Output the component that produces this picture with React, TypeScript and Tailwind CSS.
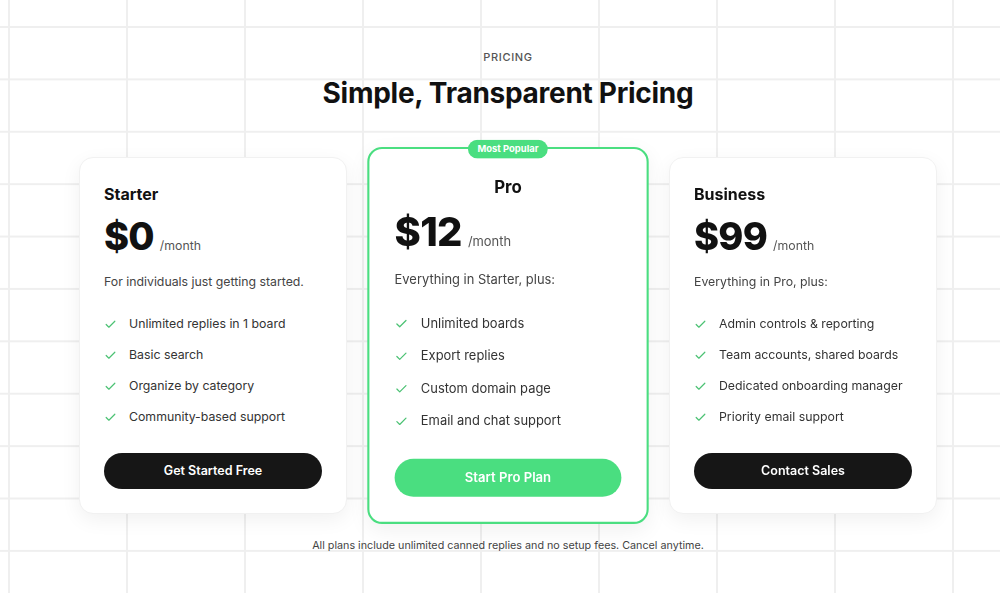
import React from "react";

const Check = () => (
  <svg width="13" height="13" viewBox="0 0 24 24" fill="none" stroke="#4cc274" strokeWidth="2.2" strokeLinecap="round" strokeLinejoin="round" className="shrink-0">
    <polyline points="20 6 9 17 4 12" />
  </svg>
);

type Plan = {
  name: string;
  price: string;
  desc: string;
  features: string[];
  cta: string;
  featured?: boolean;
};

const plans: Plan[] = [
  {
    name: "Starter",
    price: "$0",
    desc: "For individuals just getting started.",
    features: ["Unlimited replies in 1 board", "Basic search", "Organize by category", "Community-based support"],
    cta: "Get Started Free",
  },
  {
    name: "Pro",
    price: "$12",
    desc: "Everything in Starter, plus:",
    features: ["Unlimited boards", "Export replies", "Custom domain page", "Email and chat support"],
    cta: "Start Pro Plan",
    featured: true,
  },
  {
    name: "Business",
    price: "$99",
    desc: "Everything in Pro, plus:",
    features: ["Admin controls & reporting", "Team accounts, shared boards", "Dedicated onboarding manager", "Priority email support"],
    cta: "Contact Sales",
  },
];

function Card({ p }: { p: Plan }) {
  return (
    <div
      className={
        p.featured
          ? "relative w-[268px] scale-105 rounded-[14px] border-2 border-[#4ade80] bg-white px-6 pt-6 pb-6 shadow-[0_6px_20px_rgba(0,0,0,0.06)]"
          : "relative w-[268px] rounded-[14px] border border-[#f1f1f1] bg-white px-6 pt-6 pb-6 shadow-[0_6px_20px_rgba(0,0,0,0.06)]"
      }
    >
      {p.featured && (
        <div className="absolute left-1/2 top-0 -translate-x-1/2 -translate-y-1/2 rounded-full bg-[#4ade80] px-[9px] py-[3px] text-[9px] font-bold leading-[12px] text-white whitespace-nowrap">
          Most Popular
        </div>
      )}
      <div className={p.featured ? "text-center text-[16px] font-bold leading-6 text-[#111]" : "text-[16px] font-bold leading-6 text-[#111]"}>
        {p.name}
      </div>
      <div className="mt-[11px] flex items-baseline">
        <span className="text-[38px] font-extrabold leading-[38px] tracking-[-0.02em] text-[#111]">{p.price}</span>
        <span className="ml-[6px] text-[12.3px] text-[#555]">/month</span>
      </div>
      <div className="mt-[17px] text-[12.3px] leading-5 text-[#444]">{p.desc}</div>
      <ul className="mt-[22px] flex flex-col gap-[11px]">
        {p.features.map((f) => (
          <li key={f} className="flex items-center gap-3 text-[12.3px] leading-5 text-[#333] whitespace-nowrap">
            <Check />
            <span>{f}</span>
          </li>
        ))}
      </ul>
      <button
        className={
          p.featured
            ? "mt-[26px] flex h-9 w-full items-center justify-center rounded-full bg-[#4ade80] text-[12.5px] font-semibold text-white"
            : "mt-[26px] flex h-9 w-full items-center justify-center rounded-full bg-[#161616] text-[12.5px] font-semibold text-white"
        }
      >
        {p.cta}
      </button>
    </div>
  );
}

export default function App() {
  return (
    <div
      className="h-[593px] w-full overflow-hidden bg-white bg-[linear-gradient(to_right,#efefef_2px,transparent_2px),linear-gradient(to_bottom,#efefef_2px,transparent_2px)] bg-[length:118px_52.4px] bg-[position:8px_26px] pl-4"
      style={{ fontFamily: "Inter, 'Noto Sans', sans-serif" }}
    >
      <div className="flex flex-col items-center pt-[49px]">
        <div className="text-[11px] font-medium leading-4 tracking-[0.06em] text-[#555]">PRICING</div>
        <h1 className="mt-[11px] text-[28px] font-bold leading-[34px] tracking-[-0.01em] text-[#111]">
          Simple, Transparent Pricing
        </h1>
        <div className="mt-[46px] flex items-center gap-[27px]">
          {plans.map((p) => (
            <Card key={p.name} p={p} />
          ))}
        </div>
        <div className="mt-[23px] text-[10.75px] leading-4 text-[#444]">
          All plans include unlimited canned replies and no setup fees. Cancel anytime.
        </div>
      </div>
    </div>
  );
}
